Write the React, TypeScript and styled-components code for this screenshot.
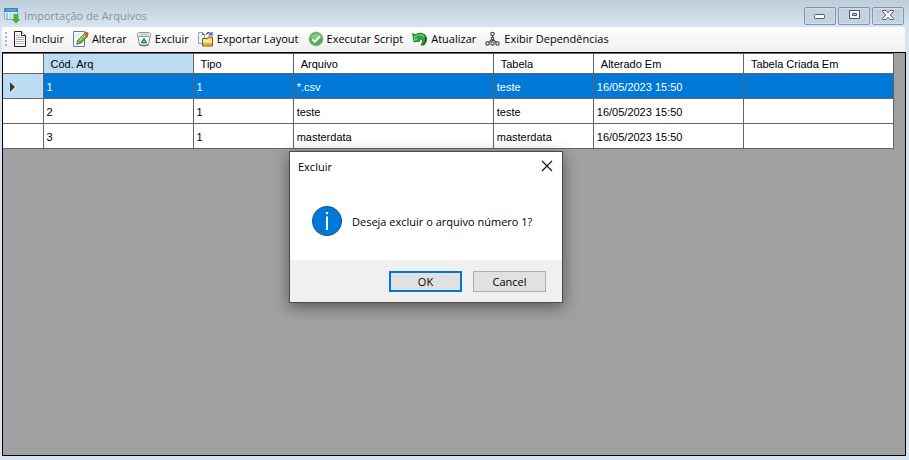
import React from "react";
import styled, { createGlobalStyle } from "styled-components";

const GlobalStyle = createGlobalStyle`
  * { box-sizing: border-box; }
  html, body { margin: 0; }
  body { font-family: "Open Sans", "Noto Sans", sans-serif; font-size: 11px; color: #000; }
  button { font: inherit; color: inherit; margin: 0; }
`;

const Window = styled.main`
  position: relative;
  display: flex;
  flex-direction: column;
  min-height: 100vh;
  padding: 0 3px 4px 2px;
  background: linear-gradient(#bfcddb 0, #d7e4f2 27px, #d7e4f2 100%);
`;

const TitleBar = styled.header`
  display: flex;
  align-items: center;
  gap: 4px;
  height: 27px;
  padding: 4px 2px 0 2px;
`;

const Title = styled.h1`
  flex: 1;
  margin: 0;
  font-size: 11px;
  line-height: 16px;
  font-weight: 400;
  color: #8b929a;
`;

const Captions = styled.div`
  display: flex;
  gap: 2px;
`;

const CaptionButton = styled.button`
  display: flex;
  align-items: center;
  justify-content: center;
  width: 32px;
  height: 18px;
  padding: 0 0 2px;
  border: 1px solid #8393aa;
  border-radius: 2px;
  background: #c4d1df;
  box-shadow: inset 0 0 0 1px #d2deea;
`;

const Toolbar = styled.nav`
  display: flex;
  align-items: center;
  gap: 9px;
  height: 25px;
  padding: 0 0 2px 3px;
  margin-right: 1px;
  border-radius: 2px 2px 0 0;
  background: linear-gradient(#fdfdfd, #f0f0f0);
`;

const Grip = styled.span`
  width: 2px;
  height: 14px;
  margin-right: -3px;
  background: repeating-linear-gradient(#b4b4b4 0 2px, transparent 2px 4px);
`;

const ToolButton = styled.button`
  display: flex;
  align-items: center;
  gap: 3px;
  padding: 0;
  border: 0;
  background: none;
  line-height: 16px;
  white-space: nowrap;
`;

const GridArea = styled.section`
  flex: 1;
  border: 1px solid #000;
  background: #a0a0a0;
`;

const Table = styled.table`
  width: 891px;
  table-layout: fixed;
  border-collapse: collapse;
  font-family: "Liberation Sans", Arial, sans-serif;
  font-size: 11px;
  line-height: 16px;
`;

const Col = styled.col<{ $w: number }>`
  width: ${(p) => p.$w}px;
`;

const HeadCell = styled.th<{ $active?: boolean }>`
  height: 20px;
  padding: 0 0 0 7px;
  border: 1px solid #646464;
  border-left-width: ${(p) => (p.$active === undefined ? "0" : "1px")};
  background: ${(p) => (p.$active ? "#bcdcf4" : "#fff")};
  font-weight: 400;
  text-align: left;
`;

const Row = styled.tr<{ $selected: boolean }>`
  background: ${(p) => (p.$selected ? "#0078d7" : "#fff")};
  color: ${(p) => (p.$selected ? "#fff" : "#000")};
`;

const Cell = styled.td`
  height: 25px;
  padding: 2px 0 0 3px;
  border: 1px solid #646464;
  white-space: nowrap;
`;

const RowHeader = styled.th<{ $selected: boolean }>`
  height: 25px;
  padding: 2px 0 0 6px;
  border: 1px solid #646464;
  border-left-width: 0;
  background: ${(p) => (p.$selected ? "#bcdcf4" : "#fff")};
  text-align: left;
  svg { display: block; }
`;

const Dialog = styled.div`
  position: absolute;
  left: 289px;
  top: 151px;
  width: 274px;
  border: 1px solid #4c4c4c;
  background: #fff;
  box-shadow: 0 4px 14px rgba(0, 0, 0, 0.45);
`;

const DialogHead = styled.div`
  display: flex;
  align-items: center;
  justify-content: space-between;
  height: 30px;
  padding: 0 9px 0 8px;
`;

const DialogTitle = styled.h2`
  margin: 0;
  font-size: 11px;
  line-height: 16px;
  font-weight: 400;
`;

const CloseButton = styled.button`
  display: flex;
  padding: 0 0 2px;
  border: 0;
  background: none;
`;

const DialogBody = styled.div`
  display: flex;
  align-items: flex-start;
  gap: 9px;
  height: 78px;
  padding: 24px 0 0 22px;
`;

const Message = styled.p`
  margin: 0;
  padding-top: 8px;
  line-height: 16px;
  white-space: nowrap;
`;

const DialogFoot = styled.div`
  display: flex;
  justify-content: flex-end;
  gap: 11px;
  padding: 11px 16px 10px;
  background: #f0f0f0;
`;

const DialogButton = styled.button<{ $primary?: boolean }>`
  width: 73px;
  height: 21px;
  padding: 0;
  border: ${(p) => (p.$primary ? "2px solid #0078d7" : "1px solid #adadad")};
  background: #e1e1e1;
  line-height: 16px;
`;

const Icon = ({ children }: { children: React.ReactNode }) => (
  <svg width="16" height="16" viewBox="0 0 16 16" aria-hidden="true">{children}</svg>
);

const AppIcon = () => (
  <Icon>
    <rect x="0.5" y="0.5" width="13" height="11" rx="1" fill="#e4eef7" stroke="#7fb0d4" />
    <rect x="0" y="0" width="14" height="4" rx="1" fill="#3a86bb" />
    <path d="M2 2h10" stroke="#8cc4e6" />
    <path d="M2 6h2M2 8h2M2 10h2" stroke="#4b95c9" strokeWidth="1.200" />
    <path d="M5 6h7M5 8h5M5 10h4" stroke="#b3cfe4" />
    <path d="M10 6.500h4v5h1.500l-3.500 3.800-3.500-3.800H10z" fill="#4db52b" stroke="#3f9c28" strokeWidth="0.600" />
  </Icon>
);

const DocIcon = () => (
  <Icon>
    <path d="M1.500 0.500h7l4 4v11h-11z" fill="#f7f7f7" stroke="#222" />
    <path d="M8.500 0.500v4h4" fill="#fff" stroke="#222" />
    <path d="M3 4.500h4M3 6.500h8M3 8.500h8M3 10.500h8M3 12.500h8" stroke="#b5b5b5" />
  </Icon>
);

const EditIcon = () => (
  <Icon>
    <path d="M0.500 0.500h11v15h-11z" fill="#f5f9fd" stroke="#5c7fa6" />
    <path d="M2 3.500h5M2 6h3" stroke="#d3deea" />
    <path d="M4 13l1-4 7-7 3 3-7 7z" fill="#72ad3c" stroke="#426f2a" strokeWidth="0.800" />
    <path d="M6 10l6.500-6.500" stroke="#b9dc7b" strokeWidth="1.200" />
    <path d="M11 3l1.500-2q1-1 2.300 0.200t0.400 2.500l-1.700 1.800z" fill="#dc5840" />
    <path d="M4 13l0.900-3.500 2.500 2.500z" fill="#ecd09a" stroke="#5d4a2b" strokeWidth="0.700" />
    <path d="M3.500 13.500l1-0.200-0.700-0.800z" fill="#222" />
  </Icon>
);

const BinIcon = () => (
  <Icon>
    <path d="M1.700 4.500L3.500 14q4.500 2 9 0l1.800-9.500z" fill="#f1f4f7" stroke="#7c8893" />
    <path d="M1 3.500l1.500-2h11l1.500 2-1.500 1.700q-5.500 1-11 0z" fill="#fafcfd" stroke="#8998a6" />
    <path d="M3 3.700q5 1.700 10 0l-1-1.200H4z" fill="#b7c7d5" />
    <path d="M3.700 13.800q4.300 1.800 8.600 0" fill="none" stroke="#4e5c68" />
    <path d="M8 8l2.200 3.700H5.800z" fill="#fff" stroke="#259337" strokeWidth="1.600" strokeLinejoin="round" />
  </Icon>
);

const ExportIcon = () => (
  <Icon>
    <path d="M0.500 1.500h4l2 2v9h-6z" fill="#eaf2fc" stroke="#8fa2c2" />
    <path d="M4.500 1.500v2h2" fill="none" stroke="#536b99" />
    <path d="M8 3.500q2.500-3.500 5-0.500M14 1v3h-3.500" fill="none" stroke="#35537e" strokeWidth="1.200" />
    <path d="M4.500 15v-7.500h5l1-1.500h4v9z" fill="#f2c84e" stroke="#7a5b20" />
    <path d="M5 8.500h9v3H5z" fill="#ffeb9b" />
    <path d="M5 12.500h9v2H5z" fill="#dba32c" />
  </Icon>
);

const CheckIcon = () => (
  <Icon>
    <circle cx="8" cy="8" r="6.800" fill="#51ad55" stroke="#86aa86" />
    <path d="M2.500 7a5.600 5.600 0 0 1 11 0q-5 2-11 0z" fill="#83cb83" />
    <path d="M4.300 8.300l2.500 2.500 5-5.300" fill="none" stroke="#fff" strokeWidth="2" />
  </Icon>
);

const RefreshIcon = () => (
  <Icon>
    <path d="M0.700 2.500l2.500 1.300Q9 0.500 13 4q3.800 4.500-1 10H9q3.500-5-0.500-6l-1.500 0.700 1 1.300-6 0.800z" fill="#2da83a" stroke="#1d6428" strokeWidth="0.900" />
    <path d="M3 5.300Q8 2.500 12 5.200M2.200 5l0.600 4.300L5.500 8" fill="none" stroke="#66d467" strokeWidth="1.400" />
    <path d="M13.300 6.500q1 3-2 7" fill="none" stroke="#1c5a26" strokeWidth="1.300" />
  </Icon>
);

const TreeIcon = () => (
  <Icon>
    <path d="M7.500 4v6M7.500 8L3 12M7.500 8l4.500 4" fill="none" stroke="#4c4c4c" strokeWidth="1.200" />
    <g fill="#fff" stroke="#4c4c4c" strokeWidth="1.200">
      <circle cx="7.500" cy="3" r="1.700" />
      <circle cx="7.500" cy="7.500" r="1.300" />
      <circle cx="2.500" cy="12.500" r="1.700" />
      <circle cx="7.500" cy="12.500" r="1.700" />
      <circle cx="12.500" cy="12.500" r="1.700" />
    </g>
  </Icon>
);

const tools = [
  { label: "Incluir", icon: <DocIcon /> },
  { label: "Alterar", icon: <EditIcon /> },
  { label: "Excluir", icon: <BinIcon /> },
  { label: "Exportar Layout", icon: <ExportIcon /> },
  { label: "Executar Script", icon: <CheckIcon /> },
  { label: "Atualizar", icon: <RefreshIcon /> },
  { label: "Exibir Dependências", icon: <TreeIcon /> },
];

const headers = ["Cód. Arq", "Tipo", "Arquivo", "Tabela", "Alterado Em", "Tabela Criada Em"];
const widths = [40, 150, 100, 200, 100, 150, 150];
const rows = [
  ["1", "1", "*.csv", "teste", "16/05/2023 15:50", ""],
  ["2", "1", "teste", "teste", "16/05/2023 15:50", ""],
  ["3", "1", "masterdata", "masterdata", "16/05/2023 15:50", ""],
];

export default function App() {
  return (
    <>
      <GlobalStyle />
      <Window>
        <TitleBar>
          <AppIcon />
          <Title>Importação de Arquivos</Title>
          <Captions>
            <CaptionButton aria-label="Minimizar">
              <svg width="12" height="10" viewBox="0 0 12 10">
                <rect x="0.500" y="4.500" width="10" height="4" rx="1" fill="#f7f7f7" stroke="#535666" />
              </svg>
            </CaptionButton>
            <CaptionButton aria-label="Maximizar">
              <svg width="11" height="9" viewBox="0 0 11 9">
                <path d="M0.500 0.500h10v8h-10zM3.500 3.500v2h4v-2z" fill="#f7f7f7" fillRule="evenodd" stroke="#535666" />
              </svg>
            </CaptionButton>
            <CaptionButton aria-label="Fechar">
              <svg width="12" height="10" viewBox="0 0 12 10">
                <path d="M0.500 0.500h3.500l2 2.300 2-2.300h3.500v1L8.300 5l3.200 3.500v1H8L6 7.200 4 9.500H0.500v-1L3.700 5 0.500 1.500z" fill="#f7f7f7" stroke="#535666" />
              </svg>
            </CaptionButton>
          </Captions>
        </TitleBar>
        <Toolbar aria-label="Ferramentas">
          <Grip />
          {tools.map((t) => (
            <ToolButton key={t.label}>{t.icon}{t.label}</ToolButton>
          ))}
        </Toolbar>
        <GridArea>
          <Table>
            <colgroup>{widths.map((w, i) => <Col key={i} $w={w} />)}</colgroup>
            <thead>
              <tr>
                <HeadCell aria-label="Seleção" />
                {headers.map((h, i) => <HeadCell key={h} $active={i === 0}>{h}</HeadCell>)}
              </tr>
            </thead>
            <tbody>
              {rows.map((r, i) => (
                <Row key={r[0]} $selected={i === 0}>
                  <RowHeader $selected={i === 0} aria-label={`Linha ${r[0]}`}>
                    {i === 0 && (
                      <svg width="8" height="12" viewBox="0 0 8 12">
                        <path d="M1 0l6.500 6L1 12z" fill="#e6f1fa" />
                        <path d="M1 1l5 5-5 5z" fill="#3b3b3b" />
                      </svg>
                    )}
                  </RowHeader>
                  {r.map((c, j) => <Cell key={j}>{c}</Cell>)}
                </Row>
              ))}
            </tbody>
          </Table>
        </GridArea>
        <Dialog role="dialog" aria-labelledby="dialog-title">
          <DialogHead>
            <DialogTitle id="dialog-title">Excluir</DialogTitle>
            <CloseButton aria-label="Fechar diálogo">
              <svg width="12" height="12" viewBox="0 0 12 12"><path d="M1 1l10 10M11 1L1 11" stroke="#111" strokeWidth="1.100" /></svg>
            </CloseButton>
          </DialogHead>
          <DialogBody>
            <svg width="31" height="31" viewBox="0 0 31 31" aria-hidden="true">
              <circle cx="15" cy="15" r="14.600" fill="#0078d7" stroke="#17558c" />
              <path d="M15 10.500v13.500" stroke="#fff" strokeWidth="2" />
              <rect x="13.900" y="6" width="2.200" height="2.200" fill="#fff" />
            </svg>
            <Message>Deseja excluir o arquivo número 1?</Message>
          </DialogBody>
          <DialogFoot>
            <DialogButton $primary>OK</DialogButton>
            <DialogButton>Cancel</DialogButton>
          </DialogFoot>
        </Dialog>
      </Window>
    </>
  );
}
